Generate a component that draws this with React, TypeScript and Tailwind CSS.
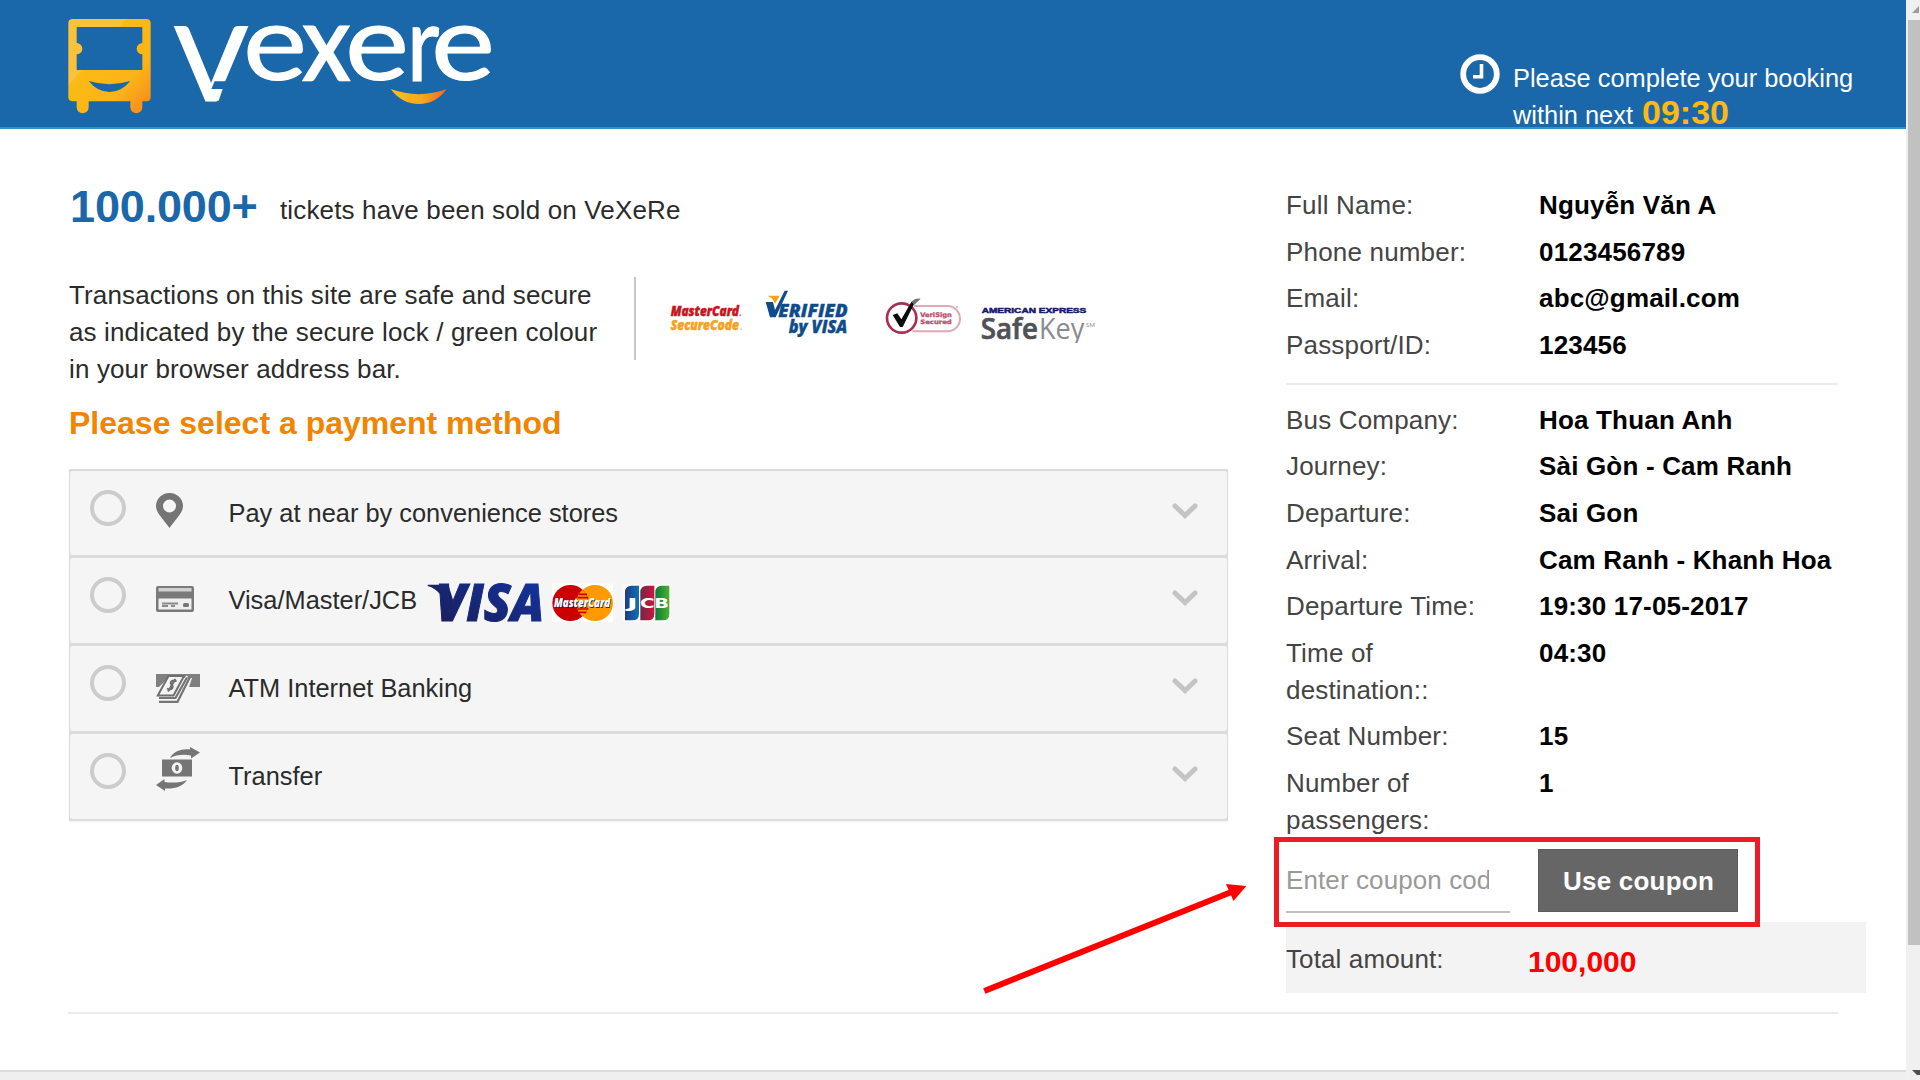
import type { ReactNode } from "react";

function VexereLogo() {
  return (
    <svg className="ml-[50px] block h-[127px] w-[460px]" viewBox="0 0 1380 381">
      <defs>
        <linearGradient id="busFill" x1="0" y1="0" x2="1" y2="1">
          <stop offset="0" stopColor="#fdc23c" />
          <stop offset="0.34" stopColor="#fdc23c" />
          <stop offset="0.36" stopColor="#fbba16" />
          <stop offset="0.7" stopColor="#fbb416" />
          <stop offset="1" stopColor="#f58220" />
        </linearGradient>
        <linearGradient id="smileFill" x1="0" y1="0" x2="1" y2="0">
          <stop offset="0" stopColor="#fcc01a" />
          <stop offset="0.55" stopColor="#f8a81c" />
          <stop offset="1" stopColor="#f1662a" />
        </linearGradient>
      </defs>
      <path
        fill="url(#busFill)"
        fillRule="evenodd"
        d="M69 57H289Q302 57 302 70V291Q302 304 289 304H277V322A18 18 0 0 1 241 322V304H116V322A18 18 0 0 1 80 322V304H69Q55 304 55 291V70Q55 57 69 57ZM80 81V129A17 17 0 0 1 80 163V210H277V163A17 17 0 0 1 277 129V81ZM116 243Q178 262 241 243Q214 276 179 276Q142 276 116 243Z"
      />
      <g fill="#fff" stroke="#fff" strokeWidth="3" fontFamily="Lato" fontWeight="400">
        <text x="377" y="300" fontSize="302" strokeWidth="9" textLength="212" lengthAdjust="spacingAndGlyphs">V</text>
        <text x="579" y="241" fontSize="312" textLength="192" lengthAdjust="spacingAndGlyphs">e</text>
        <text x="759" y="241" fontSize="314" strokeWidth="8" textLength="140" lengthAdjust="spacingAndGlyphs">x</text>
        <text x="885" y="241" fontSize="312" textLength="192" lengthAdjust="spacingAndGlyphs">e</text>
        <text x="1070" y="242" fontSize="314" textLength="98" lengthAdjust="spacingAndGlyphs">r</text>
        <text x="1143" y="241" fontSize="312" textLength="192" lengthAdjust="spacingAndGlyphs">e</text>
      </g>
      <path fill="#1a67aa" d="M494 244H548L535 267H484Z" />
      <path fill="#fff" d="M480 267H518L506 302H470Z" />
      <path fill="url(#smileFill)" d="M1022 267Q1108 298 1190 267Q1158 312 1106 312Q1056 312 1022 267Z" />
    </svg>
  );
}

function SecurityLogos() {
  return (
    <div className="mt-[6px] ml-[33px] flex">
      <svg className="h-[60px] w-[80px]" viewBox="150 65 240 180" fontFamily="Open Sans" fontWeight="800" fontStyle="italic">
        <text x="155" y="165" fontSize="43" fill="#c8141c" stroke="#c8141c" strokeWidth="1.5" textLength="205" lengthAdjust="spacingAndGlyphs">MasterCard</text>
        <text x="155" y="207" fontSize="43" fill="#f6a21c" stroke="#f6a21c" strokeWidth="1.5" textLength="205" lengthAdjust="spacingAndGlyphs">SecureCode</text>
        <circle cx="364" cy="162" r="3" fill="#d98080" />
        <circle cx="367" cy="204" r="3" fill="#f6cf90" />
      </svg>
      <svg className="ml-[13px] h-[60px] w-[90px]" viewBox="429 65 270 180" fontFamily="Open Sans" fontWeight="800" fontStyle="italic" fill="#0f4c8c">
        <path d="M440 122H462L468 146L497 88H507L470 168H453Z" />
        <path fill="#f6a21c" d="M446 103H482L468 127L461 113Z" />
        <text x="478" y="168" fontSize="55" stroke="#0f4c8c" textLength="208" lengthAdjust="spacingAndGlyphs">ERIFIED</text>
        <text x="509" y="215" fontSize="50" stroke="#0f4c8c" textLength="176" lengthAdjust="spacingAndGlyphs">by VISA</text>
      </svg>
      <svg className="ml-[32px] h-[60px] w-[80px]" viewBox="795 65 240 180" fill="none">
        <path stroke="#dfa9b6" strokeWidth="6" d="M885 134H985A37 37 0 0 1 985 210H880" />
        <circle cx="848" cy="170" r="44" stroke="#ab2e50" strokeWidth="8" fill="#fff" />
        <path fill="#0c0c0c" d="M821 161L835 156L847 174L877 122L890 118L851 197H843Z" />
        <path fill="#77706f" d="M877 122Q887 110 905 112L897 120L886 130Z" />
        <g fill="#b5536d" stroke="#b5536d" fontFamily="DejaVu Sans" fontWeight="700">
          <text x="904" y="167" fontSize="19" textLength="94" lengthAdjust="spacingAndGlyphs">VeriSign</text>
          <text x="904" y="189" fontSize="18" textLength="94" lengthAdjust="spacingAndGlyphs">Secured</text>
        </g>
        <circle cx="1014" cy="137" r="3" fill="#dfa9b6" />
      </svg>
      <svg className="ml-[15px] h-[60px] w-[120px]" viewBox="1080 65 360 180">
        <text x="1088" y="155" fontSize="23" fontFamily="Liberation Sans" fontWeight="700" fill="#14186a" stroke="#14186a" strokeWidth="1.5" textLength="314" lengthAdjust="spacingAndGlyphs">AMERICAN EXPRESS</text>
        <text x="1085" y="232" fontSize="85" fontFamily="Open Sans" fontWeight="600" fill="#505156" stroke="#505156" strokeWidth="2" textLength="172" lengthAdjust="spacingAndGlyphs">Safe</text>
        <text x="1260" y="232" fontSize="85" fontFamily="Open Sans" fontWeight="400" fill="#8a8b8f" textLength="136" lengthAdjust="spacingAndGlyphs">Key</text>
        <text x="1400" y="197" fontSize="17" fontFamily="Open Sans" fill="#8a8b8f" textLength="28" lengthAdjust="spacingAndGlyphs">SM</text>
      </svg>
    </div>
  );
}

function PinIcon() {
  return (
    <svg className="mt-[22px] h-[35px] w-[27px]" viewBox="0 0 27 35">
      <path fill="#757575" fillRule="evenodd" d="M13.5 0A13.3 13.3 0 0 1 27 13.3C27 20 19 27 13.5 35C8 27 0 20 0 13.3A13.3 13.3 0 0 1 13.5 0ZM13.5 6.500A6.500 6.500 0 1 0 13.5 19.500A6.500 6.500 0 1 0 13.5 6.500Z" />
    </svg>
  );
}

function CardIcon() {
  return (
    <svg className="mt-[28px] h-[26px] w-[38px]" viewBox="0 0 38 26">
      <rect width="38" height="26" rx="2" fill="#7a7a7a" />
      <rect x="2.500" y="2" width="33" height="3.500" fill="#cfcfcf" />
      <rect x="2.500" y="12.500" width="33" height="11" fill="#efefef" />
      <path stroke="#8a8a8a" strokeWidth="1.800" d="M6 17.500H22M6 20H12M15 20H19" />
      <rect x="27" y="17" width="6" height="4" rx="1.500" fill="#757575" />
    </svg>
  );
}

function CashIcon() {
  return (
    <svg className="mt-[28px] h-[29px] w-[44px]" viewBox="0 0 44 29">
      <path fill="#808080" d="M0 0H44V13H33L36 4H12L3 13H0Z" />
      <path fill="#f4f4f4" stroke="#6f6f6f" strokeWidth="2" d="M12.500 2H28L17.500 21.500H1.800Z" />
      <path fill="none" stroke="#f4f4f4" strokeWidth="2.200" d="M31 2L19.500 24.500" />
      <path fill="none" stroke="#757575" strokeWidth="2.200" d="M34 3L21.500 27.800H3M31 3.500L19.500 24H3" />
      <path fill="none" stroke="#6f6f6f" strokeWidth="2" d="M20.500 7.500C17 5 13 8 15.500 10.500C18.500 13 15.500 17 11 14.500M19.500 5L12 17.500" />
    </svg>
  );
}

function TransferIcon() {
  return (
    <svg className="mt-[13px] h-[44px] w-[44px]" viewBox="0 0 44 44">
      <g fill="#757575">
        <path d="M14 11C18 4 26 1.500 34 2.500V0L44 5.500L35 11.500V8.500C27 7 20 8 14 11Z" />
        <path d="M31 33C27 39.500 19 42 9 41.500V44L0 38L8.500 32V35C16 36 24 36 31 33Z" />
        <rect x="6" y="12.500" width="30" height="17" />
      </g>
      <ellipse cx="21" cy="21" rx="5.300" ry="5.800" fill="#f4f4f4" />
      <ellipse cx="21" cy="21" rx="1.800" ry="3.200" fill="#757575" />
    </svg>
  );
}

function CardBrands() {
  return (
    <svg className="mt-[25px] ml-[10px] h-[41px] w-[246px]" viewBox="48 40 738 123">
      <defs>
        <linearGradient id="visaFill" x1="0" y1="1" x2="1" y2="0">
          <stop offset="0" stopColor="#1b1c55" />
          <stop offset="1" stopColor="#1236a6" />
        </linearGradient>
        <linearGradient id="jBlue"><stop offset="0" stopColor="#233a7e" /><stop offset="1" stopColor="#0a72b8" /></linearGradient>
        <linearGradient id="cRed"><stop offset="0" stopColor="#6b2a45" /><stop offset="1" stopColor="#d4123c" /></linearGradient>
        <linearGradient id="bGreen"><stop offset="0" stopColor="#0a7a3c" /><stop offset="1" stopColor="#4fb030" /></linearGradient>
      </defs>
      <path fill="#1b2268" d="M50 45H112L132 110L108 122Q96 62 50 49Z" />
      <text x="74" y="155" fontFamily="Open Sans" fontWeight="800" fontStyle="italic" fontSize="153" fill="url(#visaFill)" stroke="url(#visaFill)" strokeWidth="3" textLength="326" lengthAdjust="spacingAndGlyphs">VISA</text>
      <rect x="423" y="42" width="183" height="115" fill="#fff" />
      <circle cx="552" cy="100" r="54" fill="#ff9a00" />
      <circle cx="478" cy="100" r="54" fill="#cc0000" />
      <path fill="#ff9a00" d="M514 60A54 54 0 0 1 514 140A54 54 0 0 1 514 60Z" />
      <path stroke="#cc0000" strokeWidth="5" d="M504 74H528M500 84H532M500 118H532M504 128H526" />
      <text x="431" y="115" fontFamily="Open Sans" fontWeight="800" fontStyle="italic" fontSize="39" fill="#1b2a66" textLength="168" lengthAdjust="spacingAndGlyphs">MasterCard</text>
      <text x="429" y="112" fontFamily="Open Sans" fontWeight="800" fontStyle="italic" fontSize="39" fill="#fff" textLength="168" lengthAdjust="spacingAndGlyphs">MasterCard</text>
      <rect x="634" y="42" width="146" height="115" rx="8" fill="#fbfbfb" />
      <path fill="url(#jBlue)" d="M642 68Q642 48 662 48H684V132Q684 152 664 152H642Z" />
      <path fill="url(#cRed)" d="M688 68Q688 48 708 48H730V132Q730 152 710 152H688Z" />
      <path fill="url(#bGreen)" d="M733 68Q733 48 753 48H775V132Q775 152 755 152H733Z" />
      <g fill="#fff" fontFamily="DejaVu Sans" fontWeight="700" fontSize="42">
        <text x="648" y="115" textLength="32" lengthAdjust="spacingAndGlyphs">J</text>
        <text x="687" y="115" textLength="44" lengthAdjust="spacingAndGlyphs">C</text>
        <text x="730" y="115" textLength="44" lengthAdjust="spacingAndGlyphs">B</text>
      </g>
    </svg>
  );
}

function PaymentRow({ icon, label, children }: { icon: ReactNode; label: string; children?: ReactNode }) {
  return (
    <div className="flex h-[85px] items-start rounded-[3px] bg-[#f5f5f5] first:h-[84px]">
      <span className="mt-[18.500px] ml-[19.500px] h-[36px] w-[36px] rounded-full border-4 border-[#cccccc]" />
      <span className="ml-[30px] block w-[73px]">{icon}</span>
      <span className="mt-[24px] text-[25.400px] leading-[37px] whitespace-nowrap text-[#2b2b2b]">{label}</span>
      {children}
      <svg className="mt-[32px] mr-[29px] ml-auto h-[16px] w-[26px]" viewBox="0 0 26 16" fill="none">
        <path stroke="#c4c4c4" strokeWidth="5" strokeLinecap="round" d="M3 3L13 12.500L23 3" />
      </svg>
    </div>
  );
}

function Detail({ label, value }: { label: string; value: string }) {
  return (
    <div className="mb-[9.600px] grid grid-cols-[253px_1fr] leading-[37px]">
      <span className="max-w-[210px] tracking-[0.180px] text-[#444]">{label}</span>
      <span className="font-bold tracking-[0.180px] whitespace-nowrap text-black">{value}</span>
    </div>
  );
}

export default function App() {
  return (
    <div className="flex h-[1080px] w-[1920px] overflow-hidden bg-white font-['Liberation_Sans',Arial,sans-serif] text-[26px]">
      <div className="relative flex w-[1906px] flex-col">
        <header className="flex h-[129px] justify-between border-b-2 border-[#2f93d3] bg-[#1a67aa]">
          <VexereLogo />
          <div className="flex pt-[54px]">
            <svg className="h-[40px] w-[40px]" viewBox="0 0 40 40" fill="none" stroke="#fff">
              <circle cx="20" cy="20" r="16.800" strokeWidth="5.800" />
              <path strokeWidth="3.600" d="M21.500 10V22.700H13" />
            </svg>
            <p className="mt-[6px] ml-[13px] w-[393px] text-[25.400px] leading-[37px] text-white">
              Please complete your booking
              <br />
              within next <b className="ml-[2px] text-[34px] leading-[20px] text-[#fdb913]">09:30</b>
            </p>
          </div>
        </header>

        <main className="flex h-[883px] pl-[69px]">
          <section className="w-[1159px] pt-[52px]">
            <div className="flex h-[51px] pl-px">
              <b className="w-[210px] text-[45px] leading-[51px] tracking-[-0.150px] text-[#1a67aa]">100.000+</b>
              <span className="mt-[11px] leading-[37px] tracking-[0.140px] text-[#2b2b2b]">tickets have been sold on VeXeRe</span>
            </div>
            <div className="mt-[45px] flex h-[111px]">
              <p className="w-[565px] leading-[37px] tracking-[0.140px] text-[#2b2b2b]">
                Transactions on this site are safe and secure
                <br />
                as indicated by the secure lock / green colour
                <br />
                in your browser address bar.
              </p>
              <span className="h-[83px] w-[2px] bg-[#c8c8c8]" />
              <SecurityLogos />
            </div>
            <h2 className="mt-[17px] text-[32px] leading-[36px] font-bold text-[#f28500]">Please select a payment method</h2>
            <div className="mt-[28px] flex flex-col gap-[3px] border-x border-y-2 border-[#dcdcdc] bg-[#dcdcdc] shadow-[0_2px_2px_rgba(0,0,0,0.04)]">
              <PaymentRow icon={<PinIcon />} label="Pay at near by convenience stores" />
              <PaymentRow icon={<CardIcon />} label="Visa/Master/JCB">
                <CardBrands />
              </PaymentRow>
              <PaymentRow icon={<CashIcon />} label="ATM Internet Banking" />
              <PaymentRow icon={<TransferIcon />} label="Transfer" />
            </div>
          </section>

          <aside className="ml-[58px] w-[580px] pt-[58px]">
            <Detail label="Full Name:" value="Nguyễn Văn A" />
            <Detail label="Phone number:" value="0123456789" />
            <Detail label="Email:" value="abc@gmail.com" />
            <Detail label="Passport/ID:" value="123456" />
            <div className="mt-[19px] mb-[17px] h-[2px] w-[552px] bg-[#ebebeb]" />
            <Detail label="Bus Company:" value="Hoa Thuan Anh" />
            <Detail label="Journey:" value="Sài Gòn - Cam Ranh" />
            <Detail label="Departure:" value="Sai Gon" />
            <Detail label="Arrival:" value="Cam Ranh - Khanh Hoa" />
            <Detail label="Departure Time:" value="19:30 17-05-2017" />
            <Detail label="Time of destination::" value="04:30" />
            <Detail label="Seat Number:" value="15" />
            <Detail label="Number of passengers:" value="1" />
            <div className="flex h-[63px] leading-[63px]">
              <div className="h-[64px] w-[224px] border-b-2 border-[#c0c0c0]">
                <div className="w-[203px] overflow-hidden tracking-[0.100px] whitespace-nowrap text-[#999]">Enter coupon code</div>
              </div>
              <button className="ml-[28px] h-[63px] w-[200px] border border-[#5c5c5c] bg-[#666] pl-px font-bold tracking-[0.230px] text-white">Use coupon</button>
            </div>
            <div className="mt-[10px] flex h-[71px] bg-[#f3f3f3] leading-[71px]">
              <span className="mt-[2px] w-[242px] tracking-[0.120px] text-[#444]">Total amount:</span>
              <b className="mt-[4px] text-[30px] text-[#ff0000]">100,000</b>
            </div>
          </aside>
        </main>
        <div className="ml-[68px] h-[2px] w-[1770px] bg-[#ebebeb]" />
        <div className="mt-auto h-[10px] border-t-2 border-[#dcdcdc] bg-[#efefef]" />

        <div className="absolute top-[837px] left-[1274px] h-[90px] w-[486px] border-[5px] border-[#ed1c24]" />
        <svg className="absolute top-[870px] left-[970px] h-[140px] w-[290px]" viewBox="970 870 290 140">
          <path stroke="#ff0000" strokeWidth="6" d="M984.300 991L1232 891.800" />
          <path fill="#ff0000" d="M1226 884L1246.300 886L1233.500 901Z" />
        </svg>
      </div>

      <div className="flex w-[14px] flex-col bg-[#f0f0f0] pl-[2px]">
        <svg className="h-[20px] w-[12px]" viewBox="0 0 12 20">
          <path fill="#9c9c9c" d="M4 13L11 6V13Z" />
        </svg>
        <div className="h-[925px] bg-[#c1c1c1]" />
        <svg className="mt-auto h-[20px] w-[12px]" viewBox="0 0 12 20">
          <path fill="#4f4f4f" d="M4 10H12V15H9Z" />
        </svg>
      </div>
    </div>
  );
}
